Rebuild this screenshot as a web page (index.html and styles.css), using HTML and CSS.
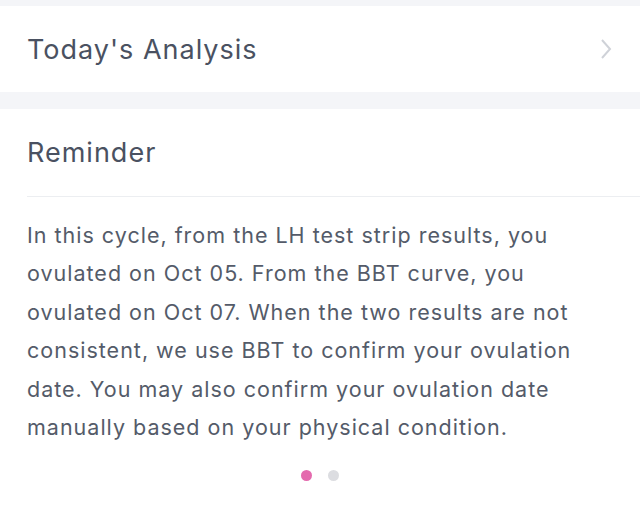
FILE: index.html
```html
<!DOCTYPE html>
<html lang="en">
<head>
    <meta charset="UTF-8">
    <meta name="viewport" content="width=device-width, initial-scale=1.0">
    <title>Today's Analysis</title>
    <link rel="stylesheet" href="styles.css">
</head>
<body>
    <div class="page">
        <div class="nav-row">
            <span class="nav-title">Today's Analysis</span>
            <svg class="chevron" viewBox="0 0 12 22" width="12" height="22">
                <path d="M2 2 L10 11 L2 20" />
            </svg>
        </div>

        <div class="card">
            <h2 class="card-title">Reminder</h2>
            <p class="card-text">
                In this cycle, from the LH test strip results, you ovulated on Oct 05. From the BBT curve, you ovulated on Oct 07. When the two results are not consistent, we use BBT to confirm your ovulation date. You may also confirm your ovulation date manually based on your physical condition.
            </p>
            <div class="dots">
                <span class="dot active"></span>
                <span class="dot"></span>
            </div>
        </div>
    </div>
</body>
</html>
```

FILE: styles.css
```css
body {
    margin: 0;
    padding: 0;
    background: #f4f5f8;
    font-family: Inter, "Noto Sans", Arial, sans-serif;
    color: #4a5161;
}

.page {
    padding-top: 6px;
}

.nav-row {
    background: #fff;
    height: 86px;
    padding: 0 27px;
    display: flex;
    align-items: center;
    justify-content: space-between;
}

.nav-title {
    font-size: 27px;
    letter-spacing: 1px;
}

.chevron {
    margin-right: 1px;
}

.chevron path {
    fill: none;
    stroke: #cfd2d8;
    stroke-width: 2;
}

.card {
    margin-top: 17px;
    background: #fff;
    padding-left: 27px;
    padding-bottom: 40px;
}

.card-title {
    margin: 0;
    height: 87px;
    display: flex;
    align-items: center;
    font-size: 27px;
    letter-spacing: 1px;
    font-weight: normal;
    border-bottom: 1px solid #eceef1;
}

.card-text {
    margin: 19px 48px 0 0;
    font-size: 21.5px;
    letter-spacing: 1px;
    line-height: 38.4px;
    color: #545b69;
}

.dots {
    display: flex;
    justify-content: center;
    gap: 16px;
    margin-top: 24px;
    padding-right: 27px;
}

.dot {
    width: 11px;
    height: 11px;
    border-radius: 50%;
    background: #dcdde1;
}

.dot.active {
    background: #e46aae;
}
```
